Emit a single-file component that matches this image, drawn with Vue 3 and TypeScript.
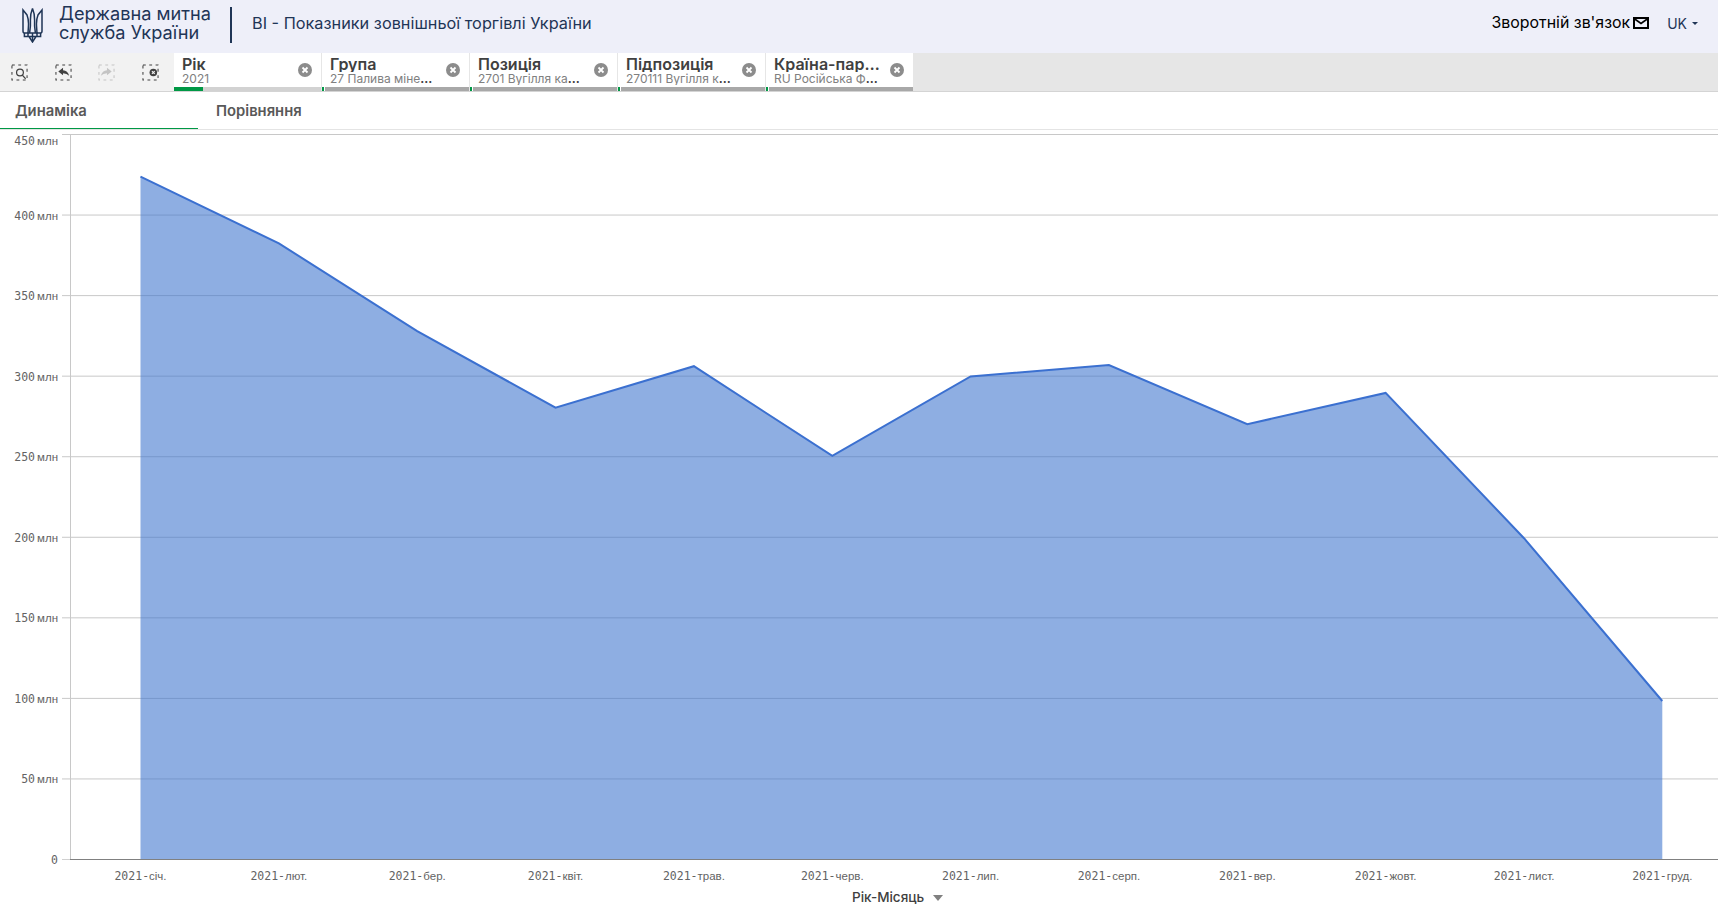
<script setup lang="ts">
import { computed } from 'vue'

// ─── Filter chips ───────────────────────────────────────────────────────────
const filters = [
  { title: 'Рік', value: '2021', active: true },
  { title: 'Група', value: '27 Палива мінеральні; нафта', active: false },
  { title: 'Позиція', value: '2701 Вугілля кам\'яне', active: false },
  { title: 'Підпозиція', value: '270111 Вугілля кам\'яне', active: false },
  { title: 'Країна-партнер', value: 'RU Російська Федерація', active: false },
]

// ─── Chart data (млн) ───────────────────────────────────────────────────────
const series = [
  { label: 'січ.', value: 423.9 },
  { label: 'лют.', value: 382.4 },
  { label: 'бер.', value: 328 },
  { label: 'квіт.', value: 280.4 },
  { label: 'трав.', value: 306.2 },
  { label: 'черв.', value: 250.5 },
  { label: 'лип.', value: 299.8 },
  { label: 'серп.', value: 306.9 },
  { label: 'вер.', value: 270.2 },
  { label: 'жовт.', value: 289.6 },
  { label: 'лист.', value: 199.4 },
  { label: 'груд.', value: 98.4 },
]

const width = 1718
const height = 776
const zeroY = 729.5
const maxY = 4.5
const firstX = 140.5
const stepX = 138.35

const yOf = (v: number) => zeroY - (v / 450) * (zeroY - maxY)
const xOf = (i: number) => firstX + i * stepX

const ticks = [450, 400, 350, 300, 250, 200, 150, 100, 50, 0]

const linePoints = computed(() =>
  series.map((d, i) => `${xOf(i).toFixed(1)},${yOf(d.value).toFixed(1)}`).join(' ')
)
const areaPoints = computed(
  () => `${firstX},${zeroY} ${linePoints.value} ${xOf(series.length - 1).toFixed(1)},${zeroY}`
)
</script>

<template>
  <div class="page">
    <!-- Top bar -->
    <header class="topbar">
      <svg class="trident" width="21" height="35" viewBox="0 0 21 35" fill="none" stroke="#1f3556" stroke-width="1.5">
        <path d="M1 2 L5 7 Q7 12 6.4 19 L6 25 H2.4 Q1 25 1 23 Z" />
        <path d="M20 2 L16 7 Q14 12 14.6 19 L15 25 H18.6 Q20 25 20 23 Z" />
        <path d="M10.5 0.5 Q8.2 6 8.4 12 Q8.8 18 7.6 25 M10.5 0.5 Q12.8 6 12.6 12 Q12.2 18 13.4 25" />
        <path d="M2.4 25 V28.5 H7 L10.5 34 L14 28.5 H18.6 V25 M6 25 H15 V28.5 H6 Z" />
        <path d="M10.5 25 V33" />
      </svg>
      <div class="org">Державна митна<br />служба України</div>
      <div class="divider"></div>
      <div class="app-title">ВІ - Показники зовнішньої торгівлі України</div>
      <div class="topbar__right">
        <span class="feedback">Зворотній зв'язок</span>
        <svg class="mail" width="16" height="12" viewBox="0 0 16 12" fill="none" stroke="#000" stroke-width="2">
          <rect x="1" y="1" width="14" height="10" />
          <path d="M1 1.5 L8 6.5 L15 1.5" stroke-width="1.6" />
        </svg>
        <span class="lang">UK</span>
        <span class="caret"></span>
      </div>
    </header>

    <!-- Selections toolbar -->
    <div class="toolbar">
      <div class="tools">
        <svg v-for="n in 4" :key="n" width="17" height="17" viewBox="0 0 18 18" :class="{ 'tool--off': n === 3 }" class="tool">
          <rect x="1" y="1" width="16" height="16" fill="none" stroke="currentColor" stroke-width="1.1" stroke-dasharray="3 3.7" />
          <g v-if="n === 1" fill="none" stroke="currentColor" stroke-width="1.3">
            <circle cx="9.5" cy="9" r="3.6" />
            <path d="M12 11.8 L15.5 15.6" />
          </g>
          <path v-else-if="n === 2" d="M3.5 8 L8.5 4 V6.6 Q13.5 6.8 15 12.5 Q12.6 9.8 8.5 9.8 V12 Z" fill="currentColor" />
          <path v-else-if="n === 3" d="M14.5 8 L9.5 4 V6.6 Q4.5 6.8 3 12.5 Q5.4 9.8 9.5 9.8 V12 Z" fill="currentColor" />
          <g v-else>
            <circle cx="12" cy="9" r="4" fill="currentColor" />
            <path d="M10.5 7.5 L13.5 10.5 M13.5 7.5 L10.5 10.5" stroke="#f2f2f2" stroke-width="1.2" />
          </g>
        </svg>
      </div>
      <div v-for="f in filters" :key="f.title" class="chip">
        <div class="chip__body">
          <div class="chip__text">
            <div class="chip__title">{{ f.title }}</div>
            <div class="chip__value"><span>{{ f.value }}</span></div>
          </div>
          <svg class="chip__close" width="14" height="14" viewBox="0 0 14 14">
            <circle cx="7" cy="7" r="7" fill="#8c8c8c" />
            <path d="M4.5 4.5 L9.5 9.5 M9.5 4.5 L4.5 9.5" stroke="#fff" stroke-width="1.8" />
          </svg>
        </div>
        <div class="chip__bar" :class="{ 'chip__bar--active': f.active }"></div>
      </div>
    </div>

    <!-- Sheet tabs -->
    <nav class="tabs">
      <div class="tab tab--active">Динаміка</div>
      <div class="tab">Порівняння</div>
    </nav>

    <!-- Area chart -->
    <svg class="chart" :width="width" :height="height" :viewBox="`0 0 ${width} ${height}`">
      <g v-for="t in ticks" :key="t">
        <line x1="62" :x2="width" :y1="yOf(t)" :y2="yOf(t)" :stroke="t === 0 ? '#d0d0d0' : '#c8c8c8'" />
        <text class="tick" x="58" :y="yOf(t) + (t === 450 ? 10 : 4.5)" text-anchor="end">
          <tspan class="digits">{{ t }}</tspan><tspan v-if="t > 0" class="unit" dx="2">млн</tspan>
        </text>
      </g>
      <line x1="70.5" x2="70.5" :y1="maxY" :y2="zeroY" stroke="#c8c8c8" />
      <polygon :points="areaPoints" fill="rgb(60, 115, 205)" fill-opacity="0.58" />
      <polyline :points="linePoints" fill="none" stroke="#3b70d0" stroke-width="2" />
      <line x1="70" :x2="width" :y1="zeroY" :y2="zeroY" stroke="#808080" />
      <text v-for="(d, i) in series" :key="d.label" class="tick" :x="xOf(i)" :y="zeroY + 20" text-anchor="middle">
        <tspan class="digits">2021-</tspan><tspan class="unit">{{ d.label }}</tspan>
      </text>
      <text class="axis-title" x="852" y="772">Рік-Місяць</text>
      <path d="M933 765 H943 L938 771 Z" fill="#808080" />
    </svg>
  </div>
</template>

<style scoped>
.page {
  width: 1718px;
  height: 906px;
  overflow: hidden;
  display: flex;
  flex-direction: column;
  background: #fff;
  font-family: Inter, 'Liberation Sans', sans-serif;
}

/* ── Top bar ─────────────────────────────────────────────────────────────── */
.topbar {
  height: 53px;
  flex: none;
  box-sizing: border-box;
  display: flex;
  align-items: center;
  padding: 0 0 8px 22px;
  background: #eeeff9;
  color: #1f3556;
}

.trident {
  flex: none;
  margin: 5px 16px 0 0;
}

.org {
  font-size: 18.2px;
  line-height: 19px;
  width: 171px;
  white-space: nowrap;
}

.divider {
  width: 2px;
  height: 36px;
  flex: none;
  margin-top: 5px;
  background: #1f3556;
}

.app-title {
  margin-left: 20px;
  font-size: 16.3px;
}

.topbar__right {
  margin-left: auto;
  display: flex;
  align-items: center;
  padding-right: 20px;
}

.feedback {
  font-size: 15.9px;
  color: #000;
}

.mail {
  margin-left: 3px;
}

.lang {
  margin: 1px 0 0 18px;
  font-size: 14px;
}

.caret {
  margin-left: 5px;
  margin-top: 1px;
  border-left: 3px solid transparent;
  border-right: 3px solid transparent;
  border-top: 3px solid #1f3556;
}

/* ── Toolbar ─────────────────────────────────────────────────────────────── */
.toolbar {
  height: 38px;
  flex: none;
  display: flex;
  background: #e6e6e6;
  border-bottom: 1px solid #d4d4d4;
}

.tools {
  width: 174px;
  flex: none;
  display: flex;
  align-items: center;
  justify-content: space-between;
  padding: 0 15px 0 11px;
  box-sizing: border-box;
  background: #f2f2f2;
}

.tool {
  color: #404040;
}

.tool--off {
  color: #c4c4c4;
}

.chip {
  width: 147px;
  margin-right: 1px;
  display: flex;
  flex-direction: column;
  background: #fff;
}

.chip__body {
  flex: 1;
  min-height: 0;
  display: flex;
  align-items: center;
  padding: 0 9px 0 8px;
}

.chip__text {
  width: 106px;
  margin-right: auto;
}

.chip__title {
  font-size: 16px;
  line-height: 16px;
  font-weight: 600;
  color: #404040;
  white-space: nowrap;
  overflow: hidden;
  text-overflow: ellipsis;
}

.chip__value {
  font-size: 12px;
  line-height: 13px;
  font-weight: 700;
  color: #404040;
  white-space: nowrap;
  overflow: hidden;
  text-overflow: ellipsis;
}

.chip__value span {
  font-weight: 400;
  color: #808080;
}

.chip__bar {
  height: 4px;
  flex: none;
  background: linear-gradient(to right, #009845 2px, #fff 2px, #fff 3px, #a8a8a8 3px);
}

.chip__bar--active {
  background: linear-gradient(to right, #009845 29px, #d2d2d2 29px);
}

/* ── Sheet tabs ──────────────────────────────────────────────────────────── */
.tabs {
  height: 38px;
  flex: none;
  display: flex;
  border-bottom: 1px solid #e4e4e4;
  box-sizing: border-box;
}

.tab {
  width: 198px;
  padding: 10px 0 0 15px;
  box-sizing: border-box;
  font-size: 14.8px;
  line-height: 18px;
  font-weight: 600;
  color: #595959;
}

.tab + .tab {
  padding-left: 18px;
}

.tab--active {
  height: 37px;
  border-bottom: 1px solid #009845;
}

/* ── Chart ───────────────────────────────────────────────────────────────── */
.chart {
  display: block;
  flex: none;
}

.tick {
  font-size: 11.5px;
  fill: #636363;
}

.digits {
  font-family: 'DejaVu Sans Mono', monospace;
}

.unit {
  font-family: 'Liberation Sans', sans-serif;
}

.axis-title {
  font-size: 13.5px;
  font-weight: 500;
  fill: #404040;
}
</style>

<style>
body {
  margin: 0;
  overflow: hidden;
}
</style>
